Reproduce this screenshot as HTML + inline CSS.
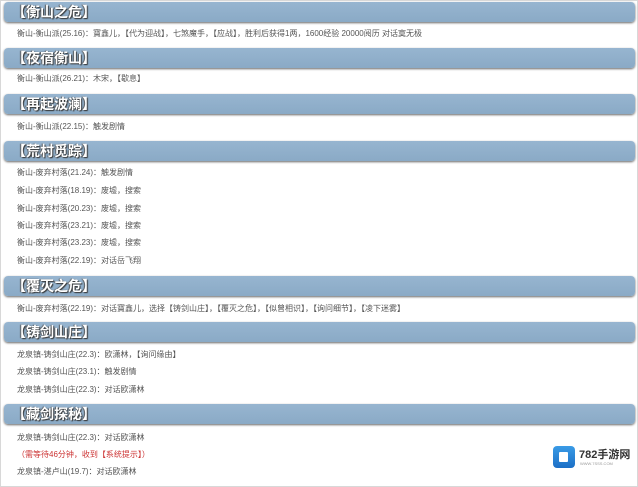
<!DOCTYPE html>
<html><head><meta charset="utf-8"><style>
body{margin:0;width:638px;height:487px;background:#fff;position:relative;overflow:hidden;font-family:"Liberation Sans","Noto Sans CJK SC",sans-serif;}
.fr{position:absolute;left:0;top:0;width:636px;height:485px;border:1px solid #d8d8d8;}
.h{position:absolute;left:4px;width:631px;height:20px;background:linear-gradient(#97b5d0,#8aaac6);border-radius:4px;box-shadow:0 1px 2px #666;color:#fff;font-weight:bold;font-size:14px;line-height:20px;text-shadow:1px 1px 1px #333,-1px 0 1px #555;padding-left:8px;box-sizing:border-box;}
.t{position:absolute;left:17px;font-size:8px;color:#555;line-height:10px;white-space:nowrap;}
.r{color:#c33;}
</style></head><body>
<div class="fr"></div>
<div class="h" style="top:2px">【衡山之危】</div>
<div class="t" style="top:29px">衡山-衡山派(25.16)：寶鑫儿，【代为迎战】，七煞魔手，【应战】，胜利后获得1两，1600经验 20000阅历 对话寞无极</div>
<div class="h" style="top:48px">【夜宿衡山】</div>
<div class="t" style="top:74px">衡山-衡山派(26.21)：木宋，【歇息】</div>
<div class="h" style="top:94px">【再起波澜】</div>
<div class="t" style="top:122px">衡山-衡山派(22.15)：触发剧情</div>
<div class="h" style="top:141px">【荒村觅踪】</div>
<div class="t" style="top:168px">衡山-废弃村落(21.24)：触发剧情</div>
<div class="t" style="top:186px">衡山-废弃村落(18.19)：废墟，搜索</div>
<div class="t" style="top:204px">衡山-废弃村落(20.23)：废墟，搜索</div>
<div class="t" style="top:221px">衡山-废弃村落(23.21)：废墟，搜索</div>
<div class="t" style="top:238px">衡山-废弃村落(23.23)：废墟，搜索</div>
<div class="t" style="top:256px">衡山-废弃村落(22.19)：对话岳飞翔</div>
<div class="h" style="top:276px">【覆灭之危】</div>
<div class="t" style="top:304px">衡山-废弃村落(22.19)：对话寶鑫儿，选择【铸剑山庄】，【覆灭之危】，【似曾相识】，【询问细节】，【凌下迷雾】</div>
<div class="h" style="top:322px">【铸剑山庄】</div>
<div class="t" style="top:350px">龙泉镇-铸剑山庄(22.3)：欧潇林，【询问缘由】</div>
<div class="t" style="top:367px">龙泉镇-铸剑山庄(23.1)：触发剧情</div>
<div class="t" style="top:385px">龙泉镇-铸剑山庄(22.3)：对话欧潇林</div>
<div class="h" style="top:404px">【藏剑探秘】</div>
<div class="t" style="top:433px">龙泉镇-铸剑山庄(22.3)：对话欧潇林</div>
<div class="t r" style="top:450px">（需等待46分钟，收到【系统提示】）</div>
<div class="t" style="top:467px">龙泉镇-湛卢山(19.7)：对话欧潇林</div>
<div style="position:absolute;left:553px;top:446px;width:22px;height:22px;border-radius:4px;background:linear-gradient(#3a9be6,#1c6fc6);"><div style="position:absolute;left:6px;top:6px;width:9px;height:10px;background:#fff;border-radius:1px"></div></div>
<div style="position:absolute;left:579px;top:446px;font-size:11px;font-weight:bold;color:#333;">782手游网</div>
<div style="position:absolute;left:580px;top:461px;font-size:4px;color:#999;">WWW.7SSS.COM</div>
</body></html>
